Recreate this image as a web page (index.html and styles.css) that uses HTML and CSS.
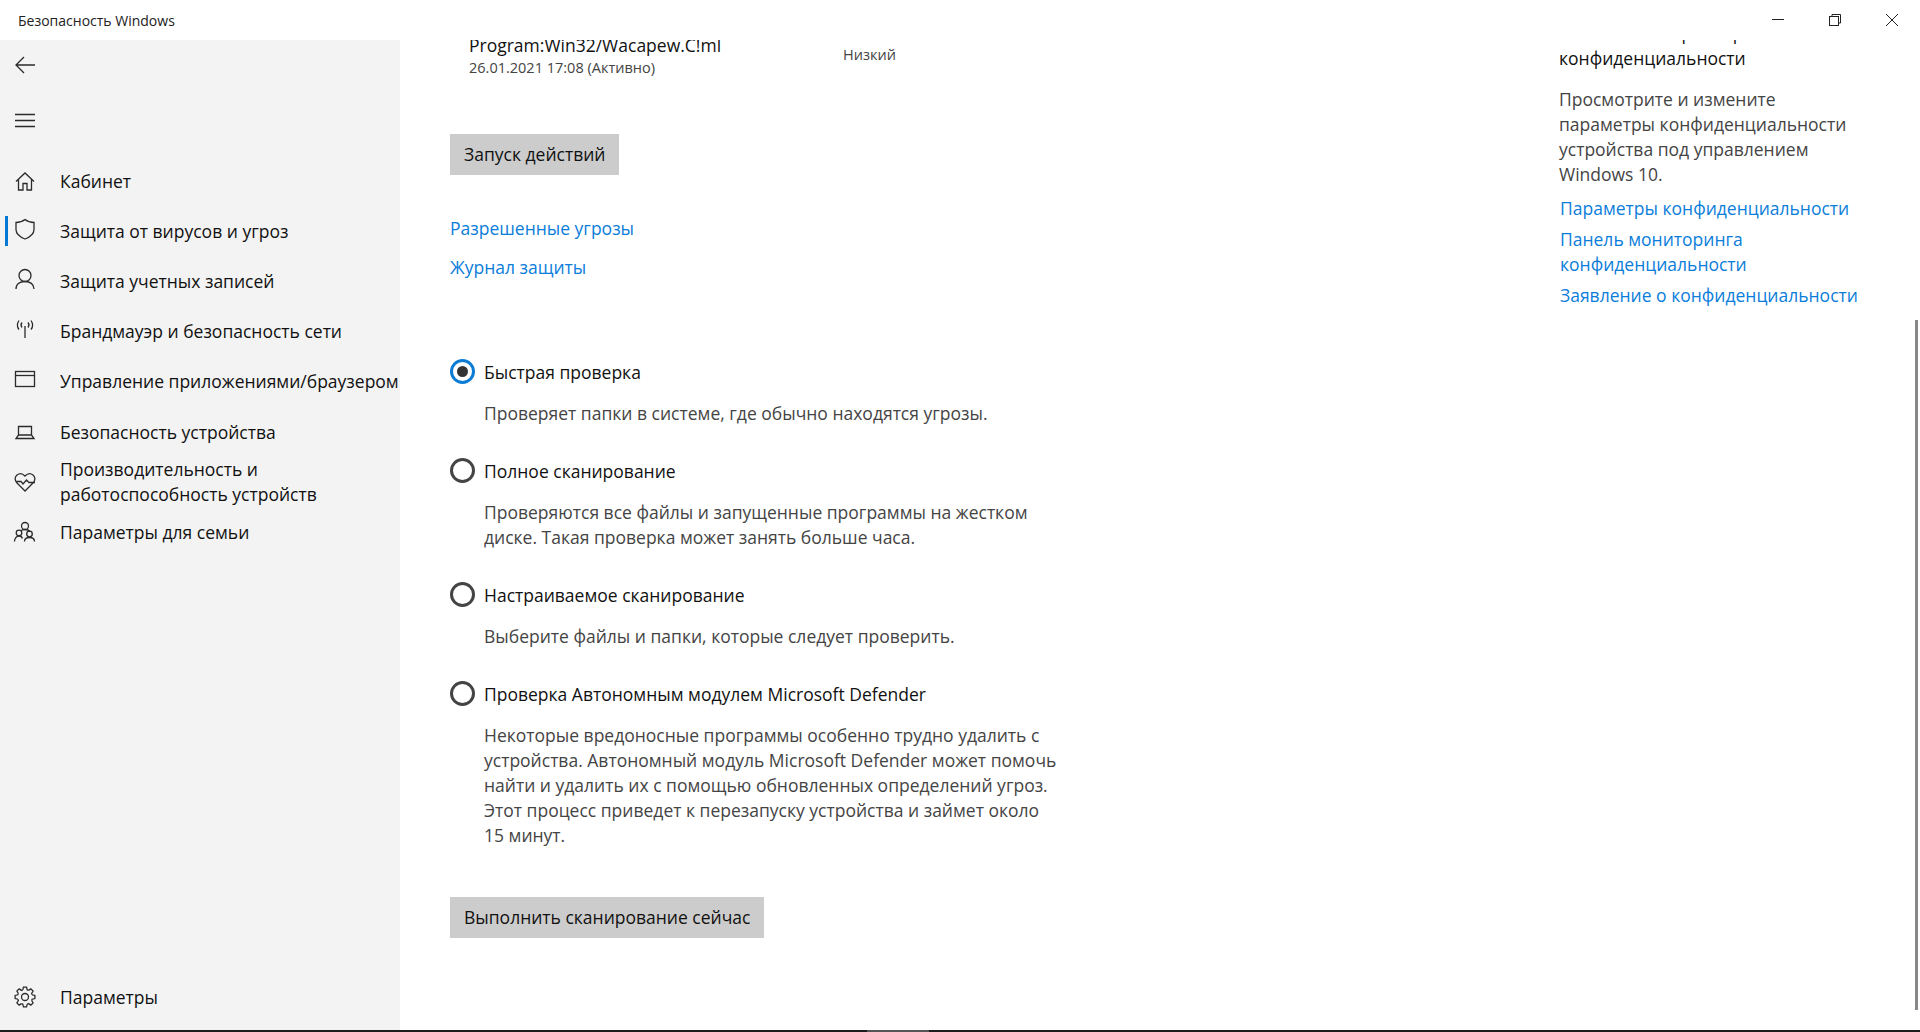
FILE: index.html
```html
<!DOCTYPE html>
<html lang="ru">
<head>
<meta charset="utf-8">
<title>Безопасность Windows</title>
<link rel="stylesheet" href="styles.css">
</head>
<body>
<svg class="defs" width="0" height="0" aria-hidden="true"><defs>
<path id="cog" d="M-2.19 -7.17L-1.56 -9.88L1.56 -9.88L2.19 -7.17A7.5 7.5 0 0 1 3.52 -6.62"/>
</defs></svg>
<div class="window">
  <header class="titlebar">
    <span class="app-title">Безопасность Windows</span>
    <div class="controls">
      <span class="ctl"><svg width="14" height="14" viewBox="0 0 14 14"><path d="M1 6.5h12"/></svg></span>
      <span class="ctl"><svg width="14" height="14" viewBox="0 0 14 14"><rect x="1.5" y="3.5" width="9" height="9"/><path d="M4 3.5V1.5h8.5v8.5h-2"/></svg></span>
      <span class="ctl"><svg width="14" height="14" viewBox="0 0 14 14"><path d="M1 1l12 12M13 1L1 13"/></svg></span>
    </div>
  </header>
  <div class="body">
    <aside class="sidebar">
      <div class="tool tool-back"><svg class="icon" viewBox="0 0 24 24"><path d="M22 12H3M11 4l-8 8 8 8"/></svg></div>
      <div class="tool tool-menu"><svg class="icon" viewBox="0 0 24 24"><path d="M2 6.5h20M2 12.5h20M2 18.5h20"/></svg></div>
      <nav class="nav">
        <a class="nav-item"><svg class="icon" viewBox="0 0 24 24"><path d="M3 12.5L12 4l9 8.5M5.500 10.500V21h4.500v-6.500h4V21h4.500V10.500"/></svg><span>Кабинет</span></a>
        <a class="nav-item active"><svg class="icon icon-up" viewBox="0 0 24 24"><path d="M12 2.500c2.500 2 5.500 3 9 3v7c0 4.500-4 7.500-9 9.500-5-2-9-5-9-9.500v-7c3.500 0 6.500-1 9-3z"/></svg><span>Защита от вирусов и угроз</span></a>
        <a class="nav-item"><svg class="icon icon-up" viewBox="0 0 24 24"><circle cx="12" cy="8.500" r="6"/><path d="M3 22c0-5 4-7.500 9-7.500s9 2.500 9 7.500"/></svg><span>Защита учетных записей</span></a>
        <a class="nav-item"><svg class="icon icon-up" viewBox="0 0 24 24"><path d="M12 9v12M9 5.500c-1.200 1.500-1.200 3.500 0 5M15 5.500c1.200 1.500 1.200 3.500 0 5M6 3.500c-2 3-2 6.500 0 9M18 3.500c2 3 2 6.500 0 9"/></svg><span>Брандмауэр и безопасность сети</span></a>
        <a class="nav-item"><svg class="icon icon-up" viewBox="0 0 24 24"><rect x="2.500" y="4.500" width="19" height="15"/><path d="M2.500 8.500h19"/></svg><span>Управление приложениями/браузером</span></a>
        <a class="nav-item"><svg class="icon" viewBox="0 0 24 24"><path d="M5.500 15V6.500h13V15M3 18.500h18l-2.500-3.500h-13z"/></svg><span>Безопасность устройства</span></a>
        <a class="nav-item"><svg class="icon icon-down" viewBox="0 0 24 24"><path d="M12 21L4 13c-2.500-2.500-2.500-6 0-8 2.500-2 5.500-1.500 8 1 2.500-2.500 5.500-3 8-1 2.500 2 2.500 5.500 0 8zM2.500 11.500H8l2 2.500 3.500-4 2.500 2.500h6"/></svg><span>Производительность и<br>работоспособность устройств</span></a>
        <a class="nav-item"><svg class="icon" viewBox="0 0 24 24"><circle cx="12" cy="6" r="3.500"/><circle cx="6" cy="13" r="2.800"/><circle cx="16.500" cy="14" r="2.800"/><path d="M1.500 21.500c0-3 2-5.500 4.500-5.500 1.500 0 3 1 3.500 2.500M11.500 21.500c0-2.500 2-4 5-4s5 1.500 5 4M8 11c.5-.8 2-1.500 4-1.500s4 .7 5 2"/></svg><span>Параметры для семьи</span></a>
      </nav>
      <a class="nav-item settings"><svg class="icon" viewBox="-12 -12 24 24"><use href="#cog"/><use href="#cog" transform="rotate(45)"/><use href="#cog" transform="rotate(90)"/><use href="#cog" transform="rotate(135)"/><use href="#cog" transform="rotate(180)"/><use href="#cog" transform="rotate(225)"/><use href="#cog" transform="rotate(270)"/><use href="#cog" transform="rotate(315)"/><circle r="3.500"/></svg><span>Параметры</span></a>
    </aside>
    <main class="main">
      <div class="scroller">
        <section class="primary">
          <div class="threat">
            <div class="threat-info">
              <div class="threat-name">Program:Win32/Wacapew.C!ml</div>
              <div class="threat-date">26.01.2021 17:08 (Активно)</div>
            </div>
            <div class="threat-level">Низкий</div>
          </div>
          <button class="btn btn-actions">Запуск действий</button>
          <a class="link link-first">Разрешенные угрозы</a>
          <a class="link link-second">Журнал защиты</a>
          <div class="options">
            <div class="option">
              <div class="opt-head"><span class="radio checked"></span><span>Быстрая проверка</span></div>
              <p class="opt-desc">Проверяет папки в системе, где обычно находятся угрозы.</p>
            </div>
            <div class="option">
              <div class="opt-head"><span class="radio"></span><span>Полное сканирование</span></div>
              <p class="opt-desc">Проверяются все файлы и запущенные программы на жестком<br>диске. Такая проверка может занять больше часа.</p>
            </div>
            <div class="option">
              <div class="opt-head"><span class="radio"></span><span>Настраиваемое сканирование</span></div>
              <p class="opt-desc">Выберите файлы и папки, которые следует проверить.</p>
            </div>
            <div class="option">
              <div class="opt-head"><span class="radio"></span><span>Проверка Автономным модулем Microsoft Defender</span></div>
              <p class="opt-desc">Некоторые вредоносные программы особенно трудно удалить с<br>устройства. Автономный модуль Microsoft Defender может помочь<br>найти и удалить их с помощью обновленных определений угроз.<br>Этот процесс приведет к перезапуску устройства и займет около<br>15 минут.</p>
            </div>
          </div>
          <button class="btn btn-scan">Выполнить сканирование сейчас</button>
        </section>
        <section class="secondary">
          <h2 class="side-head">Изменение параметров<br>конфиденциальности</h2>
          <p class="side-text">Просмотрите и измените<br>параметры конфиденциальности<br>устройства под управлением<br>Windows 10.</p>
          <a class="side-link">Параметры конфиденциальности</a>
          <a class="side-link">Панель мониторинга<br>конфиденциальности</a>
          <a class="side-link">Заявление о конфиденциальности</a>
        </section>
      </div>
      <div class="scrollbar"></div>
    </main>
  </div>
  <footer class="taskbar"><span class="taskbar-seg"></span></footer>
</div>
</body>
</html>
```
FILE: styles.css
```css
* { box-sizing: border-box; }
html, body { margin: 0; height: 100%; }
body {
  font-family: "Open Sans", "Noto Sans", "Liberation Sans", sans-serif;
  font-size: 17.5px;
  line-height: 25px;
  color: #111;
  background: #fff;
  overflow: hidden;
}
.defs { position: absolute; }
.window { display: flex; flex-direction: column; height: 1032px; }

.titlebar { height: 40px; flex: none; display: flex; align-items: center; justify-content: space-between; padding-left: 18px; background: #fff; position: relative; z-index: 2; }
.app-title { font-size: 14px; color: #222; }
.controls { display: flex; padding-right: 0; }
.ctl { width: 57px; height: 40px; display: flex; align-items: center; justify-content: center; }
.ctl svg { fill: none; stroke: #222; stroke-width: 1; }

.body { flex: 1; display: flex; min-height: 0; }
.sidebar { width: 400px; flex: none; background: #f3f3f3; display: flex; flex-direction: column; padding-bottom: 8px; }
.icon { width: 24px; height: 24px; flex: none; fill: none; stroke: #2b2b2b; stroke-width: 1.3; }
.icon use { stroke: #2b2b2b; }
.tool { height: 50px; display: flex; align-items: center; padding-left: 13px; }
.tool-menu { margin-top: 5px; }
.nav { margin-top: 11px; display: flex; flex-direction: column; flex: 1; }
.nav-item { height: 50.2px; display: flex; align-items: center; gap: 23px; padding-left: 13px; position: relative; flex: none; color: #111; }
.nav-item.active::before { content: ""; position: absolute; left: 5px; top: 10px; width: 3px; height: 30px; background: #0078d4; }
.icon-up { margin-top: -5px; }
.icon-down { margin-top: 0; }
.settings { height: 50px; }

.main { flex: 1; position: relative; overflow: hidden; background: #fff; }
.scroller { display: grid; grid-template-columns: 1fr 361px; margin-top: -20px; padding-left: 50px; }
.primary { padding-top: 13px; display: flex; flex-direction: column; align-items: flex-start; }
.threat { display: flex; width: 100%; padding-left: 19px; }
.threat-info { width: 374px; }
.threat-date { font-size: 14.500px; line-height: 20px; color: #444; }
.threat-level { font-size: 14.500px; line-height: 20px; color: #444; margin-top: 12px; }
.btn { border: 0; background: #ccc; color: #111; font: inherit; height: 41px; padding: 0 14px; }
.btn-actions { margin-top: 56px; }
.btn-scan { margin-top: 49px; }
.link { color: #0b7dda; display: block; }
.link-first { margin-top: 41px; }
.link-second { margin-top: 14px; }
.options { margin-top: 80px; display: flex; flex-direction: column; gap: 33px; }
.opt-head { display: flex; align-items: center; gap: 9px; height: 25px; margin-left: 0; }
.opt-desc { margin: 16px 0 0 34px; color: #444; }
.radio { width: 25px; height: 25px; border-radius: 50%; border: 3px solid #444; flex: none; margin-top: -3px; background: #fff; }
.radio.checked { border-color: #0c7cd5; display: flex; align-items: center; justify-content: center; }
.radio.checked::after { content: ""; width: 11px; height: 11px; border-radius: 50%; background: #333; }

.secondary { display: flex; flex-direction: column; align-items: flex-start; padding-top: 0.5px; }
.side-head { margin: 0; font: inherit; color: #111; }
.side-text { margin: 16px 0 0; color: #444; }
.side-link { color: #0b7dda; margin: 7px 0 0 1px; display: block; line-height: 24.500px; }
.side-text + .side-link { margin-top: 9px; }
.scrollbar { position: absolute; right: 2px; top: 280px; width: 3px; height: 690px; background: #888; }

.taskbar { height: 2px; flex: none; background: #1c1c1c; display: flex; padding-left: 867px; }
.taskbar-seg { width: 62px; height: 2px; background: #555; }
```
